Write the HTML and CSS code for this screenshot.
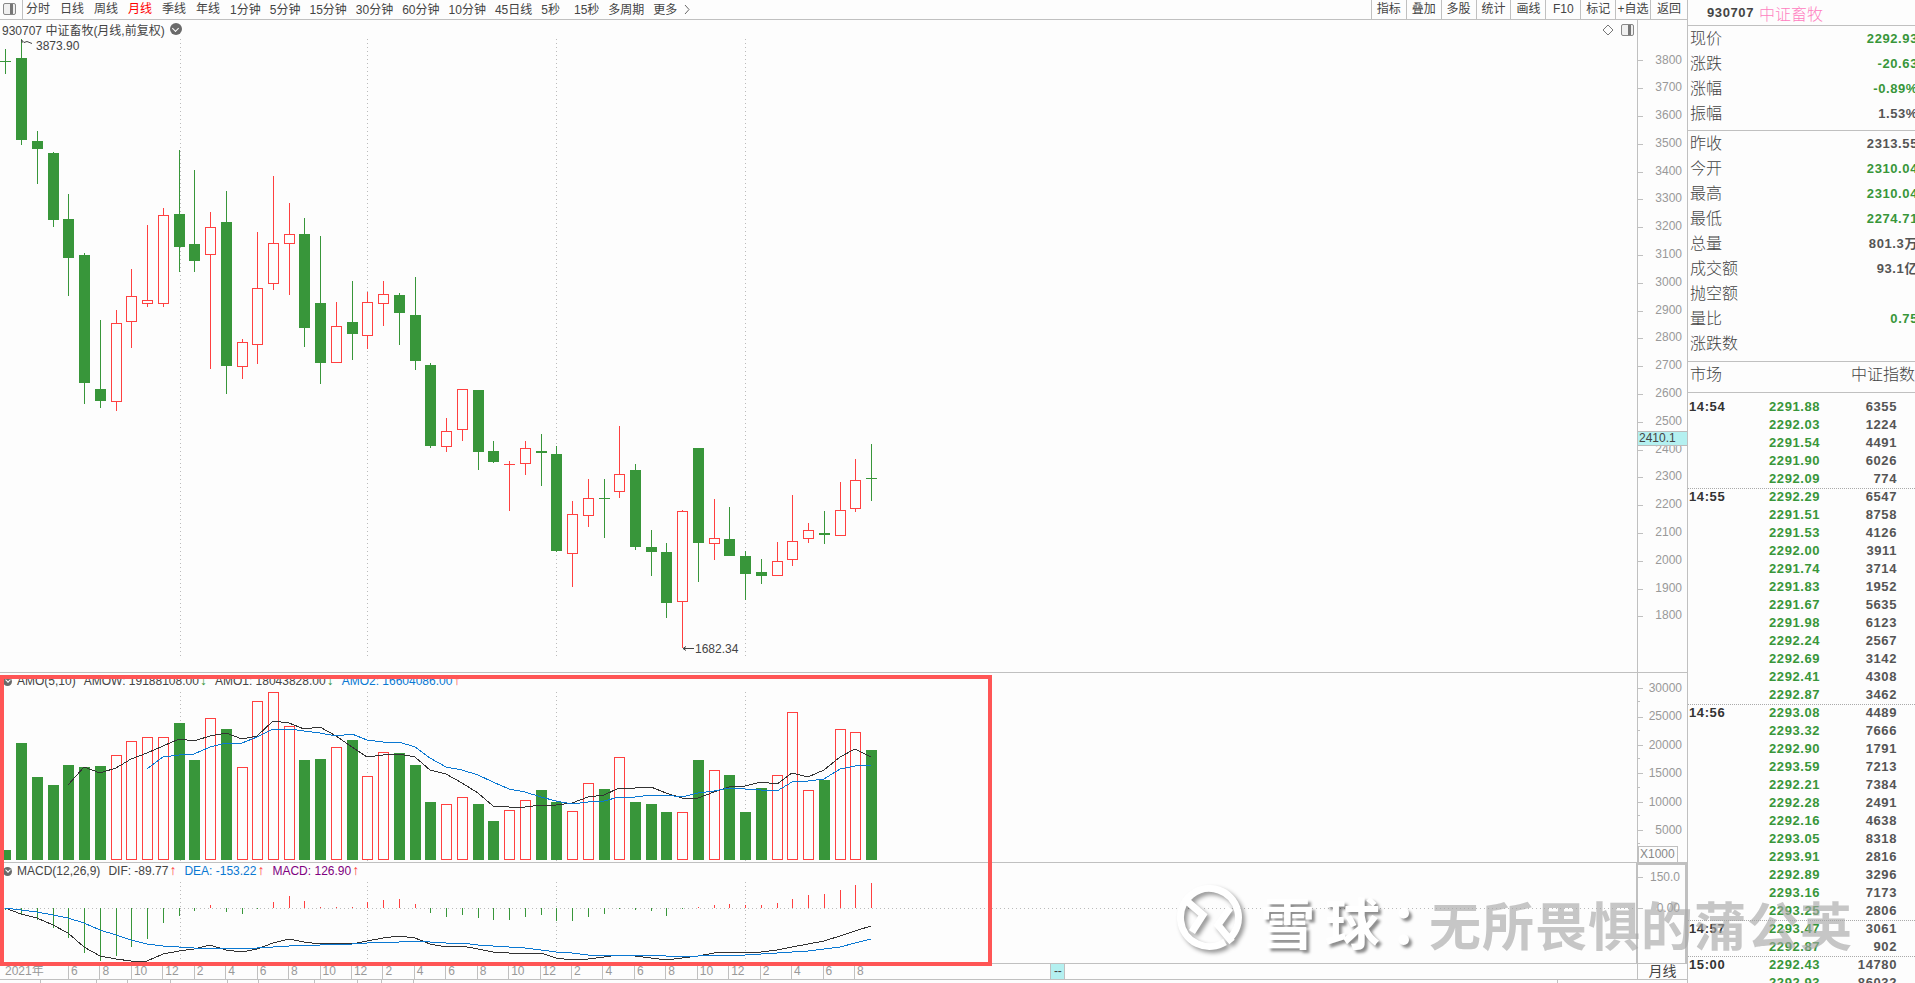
FILE: index.html
```html
<!DOCTYPE html>
<html lang="zh-CN">

<head>
    <meta charset="UTF-8">
    <title>930707 中证畜牧</title>
    <link rel="stylesheet" href="styles.css">
</head>

<body>
    <div class="app">
        <div class="left">
            <div class="toolbar">
                <div class="tool-icon"><span class="panel-icon"></span></div>
                <div class="periods">
                    <span>分时</span>
                    <span>日线</span>
                    <span>周线</span>
                    <span class="active">月线</span>
                    <span>季线</span>
                    <span>年线</span>
                </div>
                <div class="periods periods-num">
                    <span>1分钟</span>
                    <span>5分钟</span>
                    <span>15分钟</span>
                    <span>30分钟</span>
                    <span>60分钟</span>
                    <span>10分钟</span>
                    <span>45日线</span>
                    <span>5秒</span>
                    <span class="wide">15秒</span>
                    <span>多周期</span>
                    <span>更多</span>
                    <svg class="more-arrow" width="6" height="11" viewBox="0 0 6 11"><path d="M1 1l4 4.500-4 4.500" /></svg>
                </div>
                <div class="tools">
                    <span>指标</span>
                    <span>叠加</span>
                    <span>多股</span>
                    <span>统计</span>
                    <span>画线</span>
                    <span>F10</span>
                    <span>标记</span>
                    <span>+自选</span>
                    <span>返回</span>
                </div>
            </div>

            <div class="pane pane-main">
                <div class="plot">
                    <svg id="mainChart" class="chart" width="1637" height="652" viewBox="0 20 1637 652"></svg>
                    <div class="pane-title">
                        <span>930707 中证畜牧(月线,前复权)</span>
                        <span class="drop"></span>
                    </div>
                    <span class="mark mark-high">3873.90</span>
                    <span class="mark mark-low">1682.34</span>
                    <svg class="diamond" width="12" height="12" viewBox="0 0 12 12"><path d="M6 1l5 5-5 5-5-5z" /></svg>
                    <span class="panel-icon panel-icon-main"></span>
                </div>
                <div class="axis axis-main">
                    <div class="tick">3800</div>
                    <div class="tick">3700</div>
                    <div class="tick">3600</div>
                    <div class="tick">3500</div>
                    <div class="tick">3400</div>
                    <div class="tick">3300</div>
                    <div class="tick">3200</div>
                    <div class="tick">3100</div>
                    <div class="tick">3000</div>
                    <div class="tick">2900</div>
                    <div class="tick">2800</div>
                    <div class="tick">2700</div>
                    <div class="tick">2600</div>
                    <div class="tick">2500</div>
                    <div class="tick">2400</div>
                    <div class="tick">2300</div>
                    <div class="tick">2200</div>
                    <div class="tick">2100</div>
                    <div class="tick">2000</div>
                    <div class="tick">1900</div>
                    <div class="tick">1800</div>
                    <div class="price-tag">2410.1</div>
                </div>
            </div>

            <div class="pane pane-vol">
                <div class="plot">
                    <svg id="volChart" class="chart" width="1637" height="189" viewBox="0 673 1637 189"></svg>
                    <div class="pane-title pane-title-sub">
                        <span class="drop drop-small"></span>
                        <span>AMO(5,10)</span>
                        <span>AMOW: 19188108.00<i class="down">↓</i></span>
                        <span>AMO1: 18043828.00<i class="down">↓</i></span>
                        <span class="blue">AMO2: 16604086.00<i class="up">↑</i></span>
                    </div>
                </div>
                <div class="axis axis-vol">
                    <div class="tick">30000</div>
                    <div class="tick">25000</div>
                    <div class="tick">20000</div>
                    <div class="tick">15000</div>
                    <div class="tick">10000</div>
                    <div class="tick">5000</div>
                    <div class="unit">X1000</div>
                </div>
            </div>

            <div class="pane pane-macd">
                <div class="plot">
                    <svg id="macdChart" class="chart" width="1637" height="100" viewBox="0 863 1637 100"></svg>
                    <div class="pane-title pane-title-sub">
                        <span class="drop drop-small"></span>
                        <span class="macd-name">MACD(12,26,9)</span>
                        <span>DIF: -89.77<i class="up">↑</i></span>
                        <span class="blue">DEA: -153.22<i class="up">↑</i></span>
                        <span class="purple">MACD: 126.90<i class="up">↑</i></span>
                    </div>
                </div>
                <div class="axis axis-macd">
                    <div class="tick">150.0</div>
                    <div class="tick">0.00</div>
                </div>
            </div>

            <div class="time-axis">
                <div class="time-year">2021年</div>
                <div class="time-tick">6</div>
                <div class="time-tick">8</div>
                <div class="time-tick">10</div>
                <div class="time-tick">12</div>
                <div class="time-tick">2</div>
                <div class="time-tick">4</div>
                <div class="time-tick">6</div>
                <div class="time-tick">8</div>
                <div class="time-tick">10</div>
                <div class="time-tick">12</div>
                <div class="time-tick">2</div>
                <div class="time-tick">4</div>
                <div class="time-tick">6</div>
                <div class="time-tick">8</div>
                <div class="time-tick">10</div>
                <div class="time-tick">12</div>
                <div class="time-tick">2</div>
                <div class="time-tick">4</div>
                <div class="time-tick">6</div>
                <div class="time-tick">8</div>
                <div class="time-tick">10</div>
                <div class="time-tick">12</div>
                <div class="time-tick">2</div>
                <div class="time-tick">4</div>
                <div class="time-tick">6</div>
                <div class="time-tick">8</div>
                <div class="time-cursor">--</div>
                <div class="time-unit">月线</div>
            </div>

            <div class="tabs">
                <span class="tab-a"></span>
                <span class="tab-b"></span>
                <span class="tab-c"></span>
                <span class="tab-d"></span>
                <span class="tab-e"></span>
                <span class="tab-c"></span>
                <span class="tab-b"></span>
                <span class="tab-d"></span>
                <span class="tab-f"></span>
                <span class="tab-g"></span>
                <span class="tab-last"></span>
            </div>

            <div class="highlight"></div>
        </div>

        <div class="side">
            <div class="side-head">
                <span class="side-code">930707</span>
                <span class="side-name">中证畜牧</span>
            </div>
            <div class="stats stats-a">
                <div class="stat"><span>现价</span><b class="green">2292.93</b></div>
                <div class="stat"><span>涨跌</span><b class="green">-20.63</b></div>
                <div class="stat"><span>涨幅</span><b class="green">-0.89%</b></div>
                <div class="stat"><span>振幅</span><b>1.53%</b></div>
            </div>
            <div class="stats stats-b">
                <div class="stat"><span>昨收</span><b>2313.55</b></div>
                <div class="stat"><span>今开</span><b class="green">2310.04</b></div>
                <div class="stat"><span>最高</span><b class="green">2310.04</b></div>
                <div class="stat"><span>最低</span><b class="green">2274.71</b></div>
                <div class="stat"><span>总量</span><b>801.3万</b></div>
                <div class="stat"><span>成交额</span><b>93.1亿</b></div>
                <div class="stat"><span>抛空额</span><b></b></div>
                <div class="stat"><span>量比</span><b class="green">0.75</b></div>
                <div class="stat"><span>涨跌数</span><b></b></div>
            </div>
            <div class="stats stats-c">
                <div class="stat"><span>市场</span><span>中证指数</span></div>
            </div>
            <div class="trades">
                <div class="trade-group five">
                    <div class="trade"><b>14:54</b><b class="green">2291.88</b><b>6355</b></div>
                    <div class="trade"><b></b><b class="green">2292.03</b><b>1224</b></div>
                    <div class="trade"><b></b><b class="green">2291.54</b><b>4491</b></div>
                    <div class="trade"><b></b><b class="green">2291.90</b><b>6026</b></div>
                    <div class="trade"><b></b><b class="green">2292.09</b><b>774</b></div>
                </div>
                <div class="trade-group">
                    <div class="trade"><b>14:55</b><b class="green">2292.29</b><b>6547</b></div>
                    <div class="trade"><b></b><b class="green">2291.51</b><b>8758</b></div>
                    <div class="trade"><b></b><b class="green">2291.53</b><b>4126</b></div>
                    <div class="trade"><b></b><b class="green">2292.00</b><b>3911</b></div>
                    <div class="trade"><b></b><b class="green">2291.74</b><b>3714</b></div>
                    <div class="trade"><b></b><b class="green">2291.83</b><b>1952</b></div>
                    <div class="trade"><b></b><b class="green">2291.67</b><b>5635</b></div>
                    <div class="trade"><b></b><b class="green">2291.98</b><b>6123</b></div>
                    <div class="trade"><b></b><b class="green">2292.24</b><b>2567</b></div>
                    <div class="trade"><b></b><b class="green">2292.69</b><b>3142</b></div>
                    <div class="trade"><b></b><b class="green">2292.41</b><b>4308</b></div>
                    <div class="trade"><b></b><b class="green">2292.87</b><b>3462</b></div>
                </div>
                <div class="trade-group">
                    <div class="trade"><b>14:56</b><b class="green">2293.08</b><b>4489</b></div>
                    <div class="trade"><b></b><b class="green">2293.32</b><b>7666</b></div>
                    <div class="trade"><b></b><b class="green">2292.90</b><b>1791</b></div>
                    <div class="trade"><b></b><b class="green">2293.59</b><b>7213</b></div>
                    <div class="trade"><b></b><b class="green">2292.21</b><b>7384</b></div>
                    <div class="trade"><b></b><b class="green">2292.28</b><b>2491</b></div>
                    <div class="trade"><b></b><b class="green">2292.16</b><b>4638</b></div>
                    <div class="trade"><b></b><b class="green">2293.05</b><b>8318</b></div>
                    <div class="trade"><b></b><b class="green">2293.91</b><b>2816</b></div>
                    <div class="trade"><b></b><b class="green">2292.89</b><b>3296</b></div>
                    <div class="trade"><b></b><b class="green">2293.16</b><b>7173</b></div>
                    <div class="trade"><b></b><b class="green">2293.25</b><b>2806</b></div>
                </div>
                <div class="trade-group">
                    <div class="trade"><b>14:57</b><b class="green">2293.47</b><b>3061</b></div>
                    <div class="trade"><b></b><b class="green">2292.87</b><b>902</b></div>
                </div>
                <div class="trade-group">
                    <div class="trade"><b>15:00</b><b class="green">2292.43</b><b>14780</b></div>
                    <div class="trade"><b></b><b class="green">2292.93</b><b>86032</b></div>
                </div>
            </div>
        </div>

        <div class="watermark">
            <svg class="wm-logo" width="70" height="70" viewBox="0 0 70 70">
                <path d="M52 57A29 29 0 1 1 57 53" />
                <path d="M15 17L30 30 19 47" />
                <path d="M57 23L45 40 59 57" />
            </svg>
            <span class="wm-site">雪球：</span>
            <span class="wm-user">无所畏惧的蒲公英</span>
        </div>
    </div>
    <script src="chart.js"></script>
</body>

</html>
```
FILE: styles.css
```css
* {
    margin: 0;
    padding: 0;
    box-sizing: border-box;
}

html,
body {
    height: 100%;
    overflow: hidden;
}

body {
    background: #fdfdfd;
    color: #444;
    font: 12px "Liberation Sans", "Noto Sans CJK SC", sans-serif;
}

.app {
    display: grid;
    grid-template-columns: 1687px 228px;
    height: 983px;
    position: relative;
    overflow: hidden;
}

.left {
    display: flex;
    flex-direction: column;
    position: relative;
}

/* toolbar */
.toolbar {
    display: flex;
    height: 20px;
    line-height: 18px;
    border-bottom: 1px solid #c0c0c0;
    flex: none;
}

.tool-icon {
    width: 23px;
    padding: 3px 0 0 3px;
    border-right: 1px solid #c0c0c0;
}

.panel-icon {
    display: block;
    width: 13px;
    height: 12px;
    border: 1px solid #888;
    border-radius: 2px;
    background: linear-gradient(to right, #f0f0f0 6px, #777 6px, #777 9px, #f0f0f0 9px);
}

.periods {
    display: flex;
    gap: 10px;
    padding-left: 3px;
}

.periods-num {
    gap: 9px;
    padding-left: 10px;
    align-items: center;
}

.periods .active {
    color: #f00;
}

.periods .wide {
    margin-left: 5px;
}

.more-arrow {
    margin-left: -2px;
}

.more-arrow path {
    fill: none;
    stroke: #666;
}

.tools {
    display: flex;
    margin-left: auto;
}

.tools span {
    width: 34.900px;
    border-left: 1px solid #c0c0c0;
    text-align: center;
    white-space: nowrap;
}

.tools span:last-child {
    width: 37px;
}

/* panes */
.pane {
    display: flex;
    border-bottom: 1px solid #c0c0c0;
    flex: none;
}

.pane-main {
    height: 653px;
}

.pane-vol {
    height: 190px;
}

.pane-macd {
    height: 101px;
}

.plot {
    width: 1637px;
    position: relative;
    overflow: hidden;
}

.chart {
    position: absolute;
    left: 0;
    top: 0;
}

.pane-title {
    position: relative;
    display: flex;
    align-items: center;
    gap: 5px;
    height: 18px;
    padding-left: 2px;
    white-space: nowrap;
}

.pane-title-sub {
    gap: 8px;
    height: 16px;
    padding-left: 3px;
}

.macd-name {
    margin-right: 0;
}

.pane-title i {
    font-style: normal;
    font-weight: bold;
    font-size: 14px;
    line-height: 12px;
    margin-left: 1px;
}

.drop {
    width: 12px;
    height: 12px;
    border-radius: 50%;
    background: #6a6a6a;
    position: relative;
}

.drop::after {
    content: "";
    position: absolute;
    left: 3.500px;
    top: 2.500px;
    width: 4px;
    height: 4px;
    border-right: 1px solid #fff;
    border-bottom: 1px solid #fff;
    transform: rotate(45deg);
}

.drop-small {
    width: 9px;
    height: 9px;
    margin-right: -3px;
}

.drop-small::after {
    left: 2.500px;
    top: 1.500px;
    width: 3px;
    height: 3px;
}

.blue {
    color: #0a78d2;
}

.purple {
    color: #800080;
}

.down {
    color: #38963a;
}

.up {
    color: #ff4040;
}

.mark {
    position: absolute;
    color: #444;
}

.mark-high {
    left: 36px;
    top: 19px;
}

.mark-low {
    left: 695px;
    top: 622px;
}

.diamond {
    position: absolute;
    left: 1602px;
    top: 4px;
}

.diamond path {
    fill: none;
    stroke: #777;
}

.panel-icon-main {
    position: absolute;
    left: 1621px;
    top: 4px;
}

/* value axes */
.axis {
    width: 50px;
    border-left: 1px solid #c0c0c0;
    color: #999;
    position: relative;
}

.tick {
    position: relative;
    text-align: right;
    padding-right: 5px;
}

.tick::before {
    content: "";
    position: absolute;
    left: 0;
    top: 50%;
    width: 5px;
    height: 1px;
    background: #c0c0c0;
}

.axis-main {
    padding-top: 26.500px;
}

.axis-main .tick {
    height: 27.800px;
    line-height: 27.800px;
}

.price-tag {
    position: absolute;
    left: 0;
    top: 411px;
    width: 49px;
    height: 15px;
    line-height: 13px;
    padding-left: 1px;
    background: #b4f0f0;
    border-top: 1px solid #bbb;
    border-bottom: 1px solid #bbb;
    color: #444;
}

.axis-vol {
    display: flex;
    flex-direction: column;
    padding-top: 1px;
}

.axis-vol .tick {
    height: 28.400px;
    line-height: 28.400px;
}

.axis-vol .tick::after {
    content: "";
    position: absolute;
    left: 0;
    bottom: 0;
    width: 2px;
    height: 1px;
    background: #c0c0c0;
}

.unit {
    margin-top: auto;
    width: 40px;
    height: 16px;
    line-height: 14px;
    border: 1px solid #c0c0c0;
    border-bottom: 0;
    padding-left: 1px;
    color: #888;
}

.axis-macd {
    width: 51px;
    border: 2px solid #c0c0c0;
    border-bottom: 0;
    display: flex;
    flex-direction: column;
    gap: 7px;
    margin-bottom: -1px;
    padding-right: 1px;
}

.axis-macd .tick {
    height: 24px;
    line-height: 24px;
    padding-right: 4px;
}

/* time axis */
.time-axis {
    display: flex;
    height: 16px;
    line-height: 15px;
    border-bottom: 1px solid #c0c0c0;
    color: #999;
    flex: none;
}

.time-year {
    width: 68px;
    padding-left: 5px;
    white-space: nowrap;
}

.time-tick {
    width: 31.450px;
    flex: none;
    padding-left: 2px;
    border-left: 1px solid #c0c0c0;
}

.time-cursor {
    width: 15px;
    margin-left: 165px;
    background: #b4f0f0;
    border: solid #c0c0c0;
    border-width: 0 1px;
    color: #444;
    text-align: center;
    flex: none;
}

.time-unit {
    margin-left: auto;
    width: 50px;
    border-left: 1px solid #c0c0c0;
    color: #444;
    text-align: center;
    font-size: 14px;
}

/* cut off tab row */
.tabs {
    display: flex;
    flex: 1;
}

.tabs span {
    border-right: 1px solid #c0c0c0;
    flex: none;
}

.tab-a {
    width: 41px;
}

.tab-b {
    width: 56px;
}

.tab-c {
    width: 31px;
}

.tab-d {
    width: 43px;
}

.tab-e {
    width: 57px;
}

.tab-f {
    width: 24px;
}

.tab-g {
    width: 32px;
}

.tabs .tab-last {
    width: 1144px;
}

.highlight {
    position: absolute;
    left: 0;
    top: 675px;
    width: 992px;
    height: 291px;
    border: 4px solid #ff5555;
}

/* right panel */
.side {
    border-left: 1px solid #c0c0c0;
    overflow: hidden;
}

.side-head {
    height: 26px;
    padding-left: 19px;
    display: flex;
    align-items: center;
    gap: 5px;
    border-bottom: 1px solid #c0c0c0;
}

.side-code {
    font-weight: bold;
    font-size: 13px;
    letter-spacing: .6px;
}

.side-name {
    color: #ff80c0;
    font-size: 16px;
    font-weight: 300;
}

.stats {
    border-bottom: 1px solid #c0c0c0;
    font-size: 16px;
    font-weight: 300;
}

.stat {
    display: flex;
    justify-content: space-between;
    height: 25px;
    line-height: 25px;
    padding-left: 2px;
    margin-right: -3px;
}

.stat b {
    font-size: 13px;
    font-weight: bold;
    letter-spacing: .6px;
    color: #555;
}

.stats-a {
    height: 105px;
}

.stats-b {
    height: 231px;
}

.stats-c {
    height: 31px;
}

.stats-c .stat {
    margin-right: 0;
}

.side .green {
    color: #38963a;
}

.trades {
    padding-top: 5px;
}

.trade-group {
    border-bottom: 1px dotted #aaa;
    margin-bottom: -1px;
}

.trade {
    display: grid;
    grid-template-columns: 80px 60px 68px;
    height: 18px;
    line-height: 18px;
    padding-left: 1px;
    font-size: 13px;
    letter-spacing: .6px;
    color: #555;
}

.trade b:first-child {
    color: #333;
}

.trade b:last-child {
    text-align: right;
}

/* xueqiu watermark over everything */
.watermark {
    position: absolute;
    left: 1173px;
    top: 885px;
    display: flex;
    align-items: center;
    height: 70px;
    white-space: nowrap;
    font-size: 52px;
    pointer-events: none;
}

.wm-logo {
    filter: drop-shadow(3px 3px 2px rgba(0, 0, 0, .4));
    flex: none;
}

.wm-logo path {
    fill: none;
    stroke: #fff;
    stroke-width: 7;
}

.wm-site {
    margin-left: 17px;
    font-size: 55px;
    letter-spacing: 10px;
    width: 169px;
    color: #fff;
    font-weight: bold;
    text-shadow: 3px 3px 3px rgba(0, 0, 0, .45);
}

.wm-user {
    letter-spacing: 1px;
    color: rgba(165, 165, 165, .62);
    font-weight: bold;
    margin-top: 6px;
}
```
FILE: chart.js
```js
const GREEN = "#38963a";
const RED = "#ff4040";
const BG = "#fdfdfd";
const LINE_DARK = "#333";
const LINE_BLUE = "#0a78d2";
const DOT = "#bbb";

// high, body top, body bottom, low, colour
const candles = [
    [49, 61, 62, 74, "g"], [39, 58, 140, 145, "g"], [131, 141, 149, 184, "g"], [152, 153, 220, 227, "g"],
    [194, 219, 258, 296, "g"], [253, 255, 383, 404, "g"], [320, 389, 401, 408, "g"], [310, 323, 402, 411, "r"],
    [269, 296, 322, 348, "r"], [225, 300, 304, 307, "r"], [208, 215, 304, 307, "r"], [150, 214, 247, 272, "g"],
    [170, 244, 261, 272, "g"], [212, 227, 255, 369, "r"], [191, 222, 366, 394, "g"], [339, 342, 367, 379, "r"],
    [232, 288, 345, 364, "r"], [176, 243, 284, 290, "r"], [203, 234, 244, 295, "r"], [218, 234, 328, 347, "g"],
    [236, 303, 363, 384, "g"], [302, 326, 363, 363, "r"], [281, 322, 334, 360, "g"], [292, 302, 336, 349, "r"],
    [281, 294, 304, 326, "r"], [293, 295, 313, 345, "g"], [277, 315, 361, 370, "g"], [363, 365, 446, 448, "g"],
    [418, 431, 447, 452, "r"], [389, 389, 430, 441, "r"], [390, 390, 452, 470, "g"], [441, 451, 462, 463, "g"],
    [461, 464, 464, 511, "r"], [441, 448, 464, 475, "r"], [434, 451, 453, 486, "g"], [446, 454, 551, 552, "g"],
    [501, 514, 554, 587, "r"], [479, 498, 516, 527, "r"], [479, 498, 498, 538, "g"], [426, 474, 492, 498, "r"],
    [464, 470, 547, 550, "g"], [530, 547, 552, 576, "g"], [543, 552, 603, 618, "g"], [510, 511, 602, 648, "r"],
    [448, 448, 543, 582, "g"], [499, 538, 544, 560, "r"], [507, 539, 556, 556, "g"], [551, 556, 574, 600, "g"],
    [559, 572, 576, 584, "g"], [542, 561, 576, 576, "r"], [495, 541, 560, 566, "r"], [523, 530, 539, 543, "r"],
    [511, 533, 535, 544, "g"], [482, 510, 536, 536, "r"], [459, 480, 509, 512, "r"], [444, 478, 478, 501, "g"]
];

const volTops = [
    850, 743, 777, 785, 765, 767, 766, 755, 741, 737, 737, 723, 760, 718, 729, 767, 701, 692, 726, 760,
    759, 747, 740, 776, 752, 753, 765, 802, 804, 797, 804, 821, 810, 800, 790, 802, 811, 783, 789, 757,
    802, 804, 812, 812, 760, 770, 775, 812, 788, 775, 712, 790, 780, 729, 732, 750
];

const volMa5 = [
    785, 767, 773, 768, 759, 753, 746, 739, 741, 736, 733, 739, 736, 721, 723, 729, 727, 736, 747, 757,
    755, 754, 757, 770, 774, 783, 793, 806, 807, 807, 805, 805, 803, 797, 795, 788, 788, 787, 793, 798,
    798, 792, 787, 786, 782, 784, 773, 777, 770, 757, 749, 757
];

const volMa10 = [
    769, 757, 755, 754, 747, 743, 743, 737, 729, 729, 731, 733, 736, 734, 740, 742, 742, 747, 758, 767,
    770, 775, 782, 789, 792, 797, 801, 804, 802, 801, 797, 797, 795, 795, 797, 793, 791, 788, 789, 790,
    791, 782, 781, 779, 769, 766, 765
];

const macdBars = [
    910, 915, 920, 928, 938, 953, 961, 956, 947, 939, 923, 916, 911, 905, 912, 914, 909, 902, 896, 901,
    907, 907, 907, 902, 900, 899, 904, 913, 917, 915, 918, 920, 920, 917, 915, 921, 921, 917, 914, 909,
    910, 911, 916, 909, 907, 905, 904, 905, 905, 903, 899, 895, 894, 890, 885, 883
];

const macdDif = [
    908, 914, 918, 925, 933, 947, 956, 959, 961, 961, 954, 951, 949, 945, 950, 952, 949, 943, 939, 942,
    944, 943, 944, 941, 938, 936, 938, 944, 947, 946, 949, 952, 953, 953, 953, 958, 960, 959, 957, 955,
    956, 958, 960, 958, 956, 953, 952, 952, 952, 950, 947, 944, 941, 936, 931, 926
];

const macdDea = [
    908, 910, 912, 915, 918, 923, 930, 935, 940, 944, 946, 947, 948, 948, 948, 948, 948, 947, 946, 945,
    945, 944, 944, 943, 942, 942, 941, 942, 943, 943, 945, 946, 947, 948, 950, 952, 953, 955, 955, 955,
    955, 955, 956, 956, 956, 955, 955, 955, 954, 953, 952, 951, 949, 947, 943, 939
];

const gridX = [180, 367, 556, 745];

function xAt(i) {
    return Math.round(5.4 + 15.74 * i);
}

function add(svg, name, attrs) {
    const el = document.createElementNS("http://www.w3.org/2000/svg", name);
    for (const key in attrs) {
        el.setAttribute(key, attrs[key]);
    }
    svg.appendChild(el);
}

// solid 1px line, crisp on the pixel grid
function bar(svg, x, y, w, h, color) {
    add(svg, "rect", { x, y, width: w, height: h, fill: color, "shape-rendering": "crispEdges" });
}

function hollow(svg, x, y, w, h, color) {
    add(svg, "rect", {
        x: x + .5, y: y + .5, width: w - 1, height: h - 1,
        fill: BG, stroke: color, "shape-rendering": "crispEdges"
    });
}

function dotted(svg, x1, y1, x2, y2) {
    add(svg, "line", {
        x1, y1, x2, y2, stroke: DOT, "stroke-dasharray": "1 3", "shape-rendering": "crispEdges"
    });
}

function curve(svg, ys, start, color) {
    const points = ys.map((y, i) => xAt(i + start) + "," + y).join(" ");
    add(svg, "polyline", { points, fill: "none", stroke: color, "stroke-width": 1, "shape-rendering": "crispEdges" });
}

function drawMain(svg) {
    gridX.forEach(x => dotted(svg, x + .5, 39, x + .5, 657));
    candles.forEach((c, i) => {
        const x = xAt(i);
        const color = c[4] == "g" ? GREEN : RED;
        bar(svg, x, c[0], 1, c[3] - c[0], color);
        if (c[1] == c[2]) {
            bar(svg, x - 5, c[1], 11, 1, color);
        } else if (c[4] == "g") {
            bar(svg, x - 5, c[1], 11, c[2] - c[1], color);
        } else {
            hollow(svg, x - 5, c[1], 11, c[2] - c[1], color);
        }
    });
    // arrows to the two extreme prices
    add(svg, "path", { d: "M21 40.500h1l2 2 3-1 5 2M22 40v3", fill: "none", stroke: "#444" });
    add(svg, "path", { d: "M683 648.500h11M683 648.500l3-2M683 648.500l3 2", fill: "none", stroke: "#444" });
}

function drawVol(svg) {
    gridX.forEach(x => dotted(svg, x + .5, 692, x + .5, 862));
    volTops.forEach((top, i) => {
        const x = xAt(i);
        if (candles[i][4] == "g") {
            bar(svg, x - 5, top, 11, 860 - top, GREEN);
        } else {
            hollow(svg, x - 5, top, 11, 860 - top, RED);
        }
    });
    curve(svg, volMa5, 4, LINE_DARK);
    curve(svg, volMa10, 9, LINE_BLUE);
}

function drawMacd(svg) {
    gridX.forEach(x => dotted(svg, x + .5, 882, x + .5, 963));
    dotted(svg, 0, 908.5, 1637, 908.5);
    macdBars.forEach((y, i) => {
        const x = xAt(i);
        if (y > 908) {
            bar(svg, x, 908, 1, y - 908, GREEN);
        } else {
            bar(svg, x, y, 1, 908 - y, RED);
        }
    });
    curve(svg, macdDif, 0, LINE_DARK);
    curve(svg, macdDea, 0, LINE_BLUE);
}

drawMain(document.getElementById("mainChart"));
drawVol(document.getElementById("volChart"));
drawMacd(document.getElementById("macdChart"));
```
